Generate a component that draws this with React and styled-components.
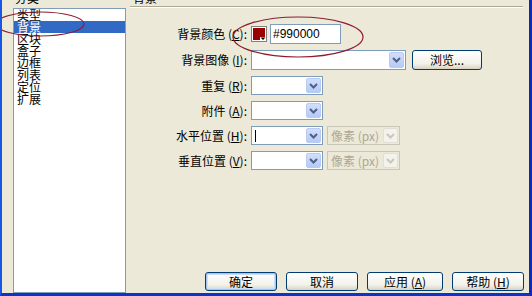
import React from 'react'
import styled, { createGlobalStyle } from 'styled-components'

const Global = createGlobalStyle`
html, body { margin: 0; padding: 0; background: #ECE9D8; overflow: hidden; }
* { box-sizing: border-box; }
`

const Frame = styled.div`
position: relative;
width: 532px;
height: 296px;
overflow: hidden;
background: #ECE9D8;
border-left: 2px solid #1757E3;
border-right: 3px solid #0B2AB8;
border-bottom: 3px solid #0E33C9;
font-family: "Noto Sans CJK SC", "Liberation Sans", sans-serif;
font-size: 12px;
color: #000;
`

const Body = styled.div`
display: flex;
height: 302px;
margin-top: -9px;
`

const Side = styled.div`
display: flex;
flex-direction: column;
padding-left: 11px;
width: 124px;
`

const Caption = styled.div`
height: 14px;
line-height: 14px;
padding-left: ${p => p.$indent || 0}px;
white-space: nowrap;
`

const ListBox = styled.div`
flex: 1;
margin-top: 3px;
background: #fff;
border: 1px solid #7F9DB9;
`

// rows are 12px apart in the reference, so the line boxes sit tight
const ListItem = styled.div`
height: 12px;
line-height: 12px;
padding-left: 3px;
background: ${p => (p.$active ? '#316AC5' : 'transparent')};
color: ${p => (p.$active ? '#fff' : '#000')};
`

const Panel = styled.div`
flex: 1;
display: flex;
flex-direction: column;
`

const Separator = styled.div`
margin: 1px 6px 0 4px;
height: 2px;
border-top: 1px solid #ACA899;
border-bottom: 1px solid #fff;
`

const Form = styled.div`
display: grid;
grid-template-columns: 121px auto;
column-gap: 4px;
row-gap: 6px;
margin-top: 16px;
align-items: center;
`

const Label = styled.div`
text-align: right;
white-space: nowrap;
line-height: 14px;
`

const Controls = styled.div`
display: flex;
align-items: center;
gap: ${p => p.$gap || 0}px;
height: ${p => p.$h || 19}px;
`

const TextBox = styled.div`
width: ${p => p.$w}px;
height: 20px;
border: 1px solid #7F9DB9;
background: #fff;
padding-left: 2px;
line-height: 18px;
font-family: "Liberation Sans", sans-serif;
font-size: 12px;
`

const Combo = styled.div`
position: relative;
display: flex;
align-items: center;
width: ${p => p.$w}px;
height: ${p => p.$h || 19}px;
border: 1px solid ${p => (p.$disabled ? '#C9C7BA' : '#7F9DB9')};
background: ${p => (p.$disabled ? '#ECE9D8' : '#fff')};
color: ${p => (p.$disabled ? '#ACA899' : '#000')};
padding-left: 3px;
line-height: 14px;
`

const ComboText = styled.span`
flex: 1;
white-space: nowrap;
`

const DropBtn = styled.div`
width: 15px;
height: calc(100% - 2px);
margin-right: 1px;
border-radius: 2px;
display: flex;
align-items: center;
justify-content: center;
background: ${p => (p.$disabled ? '#F3F2EC' : 'linear-gradient(#D2DEFB, #B6CAF7)')};
border: 1px solid ${p => (p.$disabled ? '#E2E0D6' : '#B8CBF5')};
`

const Caret = styled.div`
width: 1px;
height: 12px;
background: #000;
`

const Swatch = styled.div`
width: 16px;
height: 16px;
display: flex;
`

const Button = styled.button`
width: ${p => p.$w}px;
height: ${p => p.$h || 19}px;
padding: 0;
border: 1px solid #003C74;
border-radius: 3px;
background: linear-gradient(#FFFFFF, #F2F1EA 70%, #D8D2C2);
box-shadow: ${p => (p.$default ? 'inset 0 0 0 1px #A9C4F2, inset 0 0 0 2px #CDDDF8' : 'none')};
font-family: "Noto Sans CJK SC", "Liberation Sans", sans-serif;
font-size: 12px;
line-height: 14px;
color: #000;
margin-left: ${p => p.$ml || 0}px;
`

const Spacer = styled.div`
flex: 1;
`

const ButtonRow = styled.div`
display: flex;
justify-content: flex-end;
gap: 9px;
padding: 0 5px 2px 0;
`

const Overlay = styled.svg`
position: absolute;
left: -2px;
top: 0;
pointer-events: none;
`

const Chevron = ({ disabled }) => (
  <svg width="9" height="6" viewBox="0 0 9 6">
    <path d="M1 1 L4.5 4.5 L8 1" fill="none" stroke={disabled ? '#C9C7BA' : '#4D6185'} strokeWidth="2" />
  </svg>
)

const Select = ({ w, h, disabled, text, caret }) => (
  <Combo $w={w} $h={h} $disabled={disabled}>
    {caret ? <Caret /> : null}
    <ComboText>{text}</ComboText>
    <DropBtn $disabled={disabled}>
      <Chevron disabled={disabled} />
    </DropBtn>
  </Combo>
)

const categories = ['类型', '背景', '区块', '盒子', '边框', '列表', '定位', '扩展']

export default function App() {
  return (
    <Frame>
      <Global />
      <Body>
        <Side>
          <Caption $indent={2}>分类</Caption>
          <ListBox>
            {categories.map(c => (
              <ListItem key={c} $active={c === '背景'}>{c}</ListItem>
            ))}
          </ListBox>
        </Side>
        <Panel>
          <Caption $indent={7}>背景</Caption>
          <Separator />
          <Form>
            <Label>背景颜色 (<u>C</u>):</Label>
            <Controls $gap={3} $h={20}>
              <Swatch>
                <svg width="16" height="16" viewBox="0 0 16 16">
                  <rect x="0.5" y="0.5" width="15" height="15" fill="#fff" stroke="#808080" />
                  <rect x="2" y="2" width="12" height="12" fill="#990000" />
                  <rect x="9" y="11" width="6" height="4" fill="#fff" />
                  <path d="M9.5 11.5 L14.5 11.5 L12 14 Z" fill="#000" />
                </svg>
              </Swatch>
              <TextBox $w={71}>#990000</TextBox>
            </Controls>

            <Label>背景图像 (<u>I</u>):</Label>
            <Controls $h={20}>
              <Select w={155} h={20} />
              <Button $w={70} $h={20} $ml={6}>浏览...</Button>
            </Controls>

            <Label>重复 (<u>R</u>):</Label>
            <Controls>
              <Select w={72} />
            </Controls>

            <Label>附件 (<u>A</u>):</Label>
            <Controls>
              <Select w={72} />
            </Controls>

            <Label>水平位置 (<u>H</u>):</Label>
            <Controls $gap={4}>
              <Select w={72} caret />
              <Select w={73} disabled text="像素 (px)" />
            </Controls>

            <Label>垂直位置 (<u>V</u>):</Label>
            <Controls $gap={4}>
              <Select w={72} />
              <Select w={73} disabled text="像素 (px)" />
            </Controls>
          </Form>
          <Spacer />
          <ButtonRow>
            <Button $w={72} $default>确定</Button>
            <Button $w={72}>取消</Button>
            <Button $w={76}>应用 (<u>A</u>)</Button>
            <Button $w={72}>帮助 (<u>H</u>)</Button>
          </ButtonRow>
        </Panel>
      </Body>
      <Overlay width="532" height="296" viewBox="0 0 532 296">
        <ellipse cx="40" cy="24" rx="44" ry="12" fill="none" stroke="#8E1B2E" strokeWidth="1.2" />
        <ellipse cx="298" cy="37" rx="65" ry="20" fill="none" stroke="#8E1B2E" strokeWidth="1.2" />
      </Overlay>
    </Frame>
  )
}
